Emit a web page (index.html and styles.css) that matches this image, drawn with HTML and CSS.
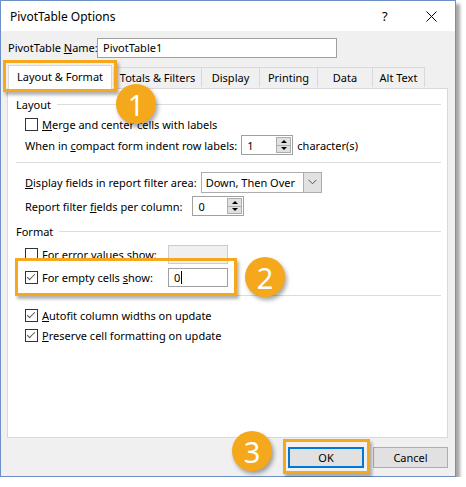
FILE: index.html
```html
<!DOCTYPE html>
<html>
<head>
<meta charset="utf-8">
<link rel="stylesheet" href="styles.css">
</head>
<body>
<div class="win">
  <div class="titlebar">
    <span class="title">PivotTable Options</span>
    <span class="help">?</span>
    <svg class="close" width="11" height="11" viewBox="0 0 11 11"><path d="M0.5 0.5 L10.5 10.5 M10.5 0.5 L0.5 10.5" stroke="#000" stroke-width="1" fill="none"/></svg>
  </div>
  <div class="namerow">
    <span class="lbl">PivotTable <u>N</u>ame:</span>
    <div class="textbox name">PivotTable1</div>
  </div>
  <div class="tabs">
    <div class="tab active">Layout &amp; Format</div>
    <div class="tab t-totals">Totals &amp; Filters</div>
    <div class="tab t-display">Display</div>
    <div class="tab t-printing">Printing</div>
    <div class="tab t-data">Data</div>
    <div class="tab t-alt">Alt Text</div>
  </div>
  <div class="panel">
    <div class="group g-layout"><span>Layout</span><i class="gline"></i></div>
    <div class="row r-merge">
      <span class="cb"></span><span><u>M</u>erge and center cells with labels</span>
    </div>
    <div class="row r-indent">
      <span>When in <u>c</u>ompact form indent row labels:</span>
      <div class="spin s-indent"><span class="val">1</span><span class="spinbtn"><i class="up"></i><i class="dn"></i></span></div>
      <span>character(s)</span>
    </div>
    <div class="sep s1"></div>
    <div class="row r-display">
      <span><u>D</u>isplay fields in report filter area:</span>
      <div class="combo"><span class="val">Down, Then Over</span><span class="arrow"><svg width="9" height="6" viewBox="0 0 9 6"><path d="M0.5 0.8 L4.5 4.8 L8.5 0.8" stroke="#555" stroke-width="1" fill="none"/></svg></span></div>
    </div>
    <div class="row r-report">
      <span>Report filter <u>f</u>ields per column:</span>
      <div class="spin s-report"><span class="val">0</span><span class="spinbtn"><i class="up"></i><i class="dn"></i></span></div>
    </div>
    <div class="group g-format"><span>Format</span><i class="gline"></i></div>
    <div class="row r-error">
      <span class="cb"></span><span class="clabel">For <u>e</u>rror values show:</span>
      <div class="textbox small disabled"></div>
    </div>
    <div class="row r-empty">
      <span class="cb checked"></span><span class="clabel">For empty cells <u>s</u>how:</span>
      <div class="textbox small">0<i class="caret"></i></div>
    </div>
    <div class="sep s2"></div>
    <div class="row r-autofit">
      <span class="cb checked"></span><span><u>A</u>utofit column widths on update</span>
    </div>
    <div class="row r-preserve">
      <span class="cb checked"></span><span><u>P</u>reserve cell formatting on update</span>
    </div>
  </div>
  <div class="buttons">
    <div class="btn ok"><span>OK</span></div>
    <div class="btn cancel">Cancel</div>
  </div>

  <div class="hl hl1"></div>
  <div class="hl hl2"></div>
  <div class="hl hl3"></div>
  <div class="badge b1">1</div>
  <div class="badge b2">2</div>
  <div class="badge b3">3</div>
</div>
</body>
</html>
```

FILE: styles.css
```css
html, body {
  margin: 0;
  padding: 0;
  background: #ffffff;
}
body {
  font-family: "Noto Sans", "Open Sans", sans-serif;
  font-size: 11px;
  color: #000;
}
u { text-decoration: underline; text-underline-offset: 1px; }

.win {
  position: relative;
  width: 454px;
  height: 475px;
  border: 1px solid #6c8fc8;
  background: #f0f0f0;
  box-shadow: 4px 4px 3px rgba(0,0,0,0.35);
}

.titlebar {
  height: 30px;
  background: #ffffff;
  display: flex;
  align-items: center;
  padding-left: 9px;
}
.title { font-size: 12px; flex: 1; }
.help { font-size: 13px; width: 44px; }
.close { margin-right: 18px; }

.namerow {
  margin-top: 7px;
  height: 19px;
  display: flex;
  align-items: center;
  padding-left: 7px;
}
.namerow .lbl { width: 89px; white-space: nowrap; }
.textbox {
  box-sizing: border-box;
  background: #fff;
  border: 1px solid #a0a0a0;
  display: flex;
  align-items: center;
  padding-left: 5px;
}
.textbox.name { width: 240px; height: 20px; }

.tabs {
  margin-top: 7px;
  height: 24px;
  display: flex;
  align-items: flex-end;
  padding-left: 7px;
  white-space: nowrap;
}
.tab {
  box-sizing: border-box;
  height: 20px;
  margin-bottom: 1px;
  border: 1px solid #d9d9d9;
  border-bottom: none;
  margin-left: -1px;
  display: flex;
  align-items: center;
  justify-content: center;
  background: #f0f0f0;
}
.tab.active {
  position: relative;
  z-index: 1;
  width: 104px;
  height: 24px;
  margin-bottom: -1px;
  margin-left: 0;
  background: #fff;
  padding-bottom: 3px;
}
.t-totals { width: 89px; margin-left: 1px; }
.t-display { width: 59px; }
.t-printing { width: 59px; }
.t-data { width: 56px; }
.t-alt { width: 53px; }

.panel {
  box-sizing: border-box;
  margin-left: 6px;
  width: 441px;
  height: 350px;
  background: #fff;
  border: 1px solid #d9d9d9;
  padding-left: 8px;
  padding-right: 6px;
  white-space: nowrap;
}

.group {
  display: flex;
  align-items: center;
  height: 16px;
}
.group .gline {
  flex: 1;
  height: 1px;
  background: #dcdcdc;
  margin-left: 6px;
}
.g-layout { margin-top: 7px; }
.g-format { margin-top: 7px; }

.row {
  display: flex;
  align-items: center;
  height: 20px;
  padding-left: 9px;
}
.r-merge { margin-top: 2px; }
.r-indent { margin-top: 1px; }
.r-display { margin-top: 9px; }
.r-report { margin-top: 4px; }
.r-error { margin-top: 5px; }
.r-empty { margin-top: 3px; }
.r-autofit { margin-top: 9px; }
.r-preserve { margin-top: 0; }

.sep { height: 1px; background: #dcdcdc; }
.s1 { margin-top: 7px; }
.s2 { margin-top: 8px; }

.cb {
  box-sizing: border-box;
  flex: none;
  width: 13px;
  height: 13px;
  border: 1px solid #333;
  margin-right: 4px;
  background: #fff;
  position: relative;
}
.cb.checked::after {
  content: "";
  position: absolute;
  left: 3px;
  top: 0px;
  width: 3px;
  height: 7px;
  border-right: 1.3px solid #555;
  border-bottom: 1.3px solid #555;
  transform: rotate(45deg);
  transform-origin: 50% 50%;
}
.clabel { width: 126px; }

.spin {
  box-sizing: border-box;
  height: 20px;
  border: 1px solid #a0a0a0;
  background: #fff;
  display: flex;
  align-items: center;
  padding-left: 5px;
}
.spin .val { flex: 1; }
.s-indent { width: 52px; margin-left: 4px; margin-right: 4px; }
.s-report { width: 52px; margin-left: 10px; }
.spinbtn {
  box-sizing: border-box;
  width: 15px;
  height: 16px;
  margin-right: 1px;
  border: 1px solid #adadad;
  background: #e1e1e1;
  display: flex;
  flex-direction: column;
}
.spinbtn i {
  flex: 1;
  display: flex;
  align-items: center;
  justify-content: center;
}
.spinbtn .up { border-bottom: 1px solid #adadad; }
.spinbtn .up::before {
  content: "";
  border-left: 3px solid transparent;
  border-right: 3px solid transparent;
  border-bottom: 3px solid #000;
}
.spinbtn .dn::before {
  content: "";
  border-left: 3px solid transparent;
  border-right: 3px solid transparent;
  border-top: 3px solid #000;
}

.combo {
  box-sizing: border-box;
  width: 121px;
  height: 21px;
  margin-left: 4px;
  border: 1px solid #adadad;
  background: #fff;
  display: flex;
  align-items: stretch;
}
.combo .val {
  flex: 1;
  display: flex;
  align-items: center;
  padding-left: 4px;
}
.combo .arrow {
  width: 17px;
  background: #e1e1e1;
  border-left: 1px solid #adadad;
  display: flex;
  align-items: center;
  justify-content: center;
}

.textbox.small { width: 60px; height: 19px; margin-left: 0; }
.textbox.disabled { background: #f0f0f0; border-color: #cccccc; }
.caret {
  display: inline-block;
  width: 1px;
  height: 13px;
  background: #000;
  margin-left: 1px;
}

.buttons {
  margin-top: 9px;
  height: 21px;
  display: flex;
  justify-content: flex-end;
  gap: 9px;
  padding-right: 7px;
}
.btn {
  box-sizing: border-box;
  width: 75px;
  height: 21px;
  background: #e1e1e1;
  border: 1px solid #adadad;
  display: flex;
  align-items: center;
  justify-content: center;
}
.btn.ok {
  width: 76px;
  border: 2px solid #0078d7;
}

.hl {
  position: absolute;
  box-sizing: border-box;
  border: 3px solid #f5a81c;
  box-shadow: 2px 3px 3px rgba(0,0,0,0.3);
}
.hl1 { left: 2px; top: 59px; width: 114px; height: 32px; }
.hl2 { left: 14px; top: 257px; width: 222px; height: 38px; }
.hl3 { left: 282px; top: 438px; width: 87px; height: 35px; }

.badge {
  position: absolute;
  width: 40px;
  height: 40px;
  border-radius: 50%;
  background: #f5a81c;
  color: #fff;
  font-size: 29px;
  display: flex;
  align-items: center;
  justify-content: center;
  box-shadow: 2px 3px 4px rgba(0,0,0,0.35);
}
.b1 { left: 115px; top: 83px; }
.b2 { left: 244px; top: 256px; }
.b3 { left: 231px; top: 430px; }
```
